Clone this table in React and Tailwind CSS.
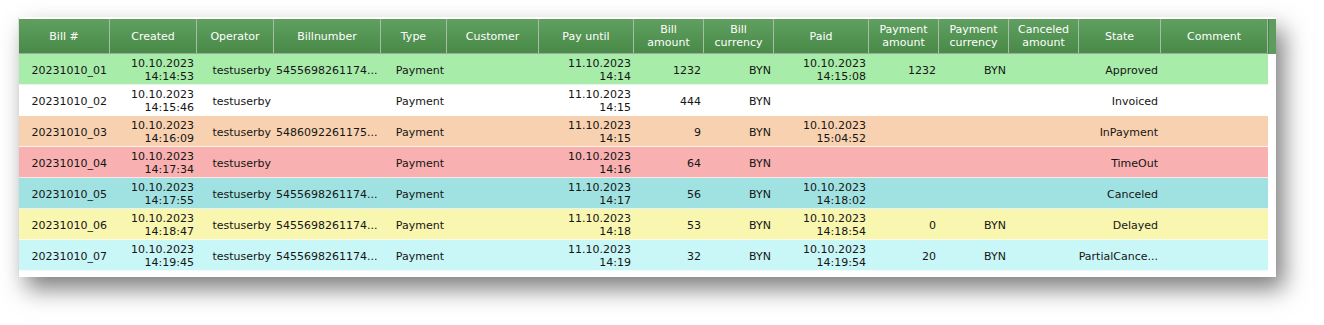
const cols = [
  { label: ['Bill #'], align: 'right' },
  { label: ['Created'], align: 'right' },
  { label: ['Operator'], align: 'right' },
  { label: ['Billnumber'], align: 'left' },
  { label: ['Type'], align: 'right' },
  { label: ['Customer'], align: 'right' },
  { label: ['Pay until'], align: 'right' },
  { label: ['Bill', 'amount'], align: 'right' },
  { label: ['Bill', 'currency'], align: 'right' },
  { label: ['Paid'], align: 'right' },
  { label: ['Payment', 'amount'], align: 'right' },
  { label: ['Payment', 'currency'], align: 'right' },
  { label: ['Canceled', 'amount'], align: 'right' },
  { label: ['State'], align: 'right' },
  { label: ['Comment'], align: 'right' },
];

const rows = [
  {
    bg: 'bg-[#a8ecaa]',
    cells: ['20231010_01', ['10.10.2023', '14:14:53'], 'testuserby', '5455698261174...', 'Payment', '', ['11.10.2023', '14:14'], '1232', 'BYN', ['10.10.2023', '14:15:08'], '1232', 'BYN', '', 'Approved', ''],
  },
  {
    bg: 'bg-white',
    cells: ['20231010_02', ['10.10.2023', '14:15:46'], 'testuserby', '', 'Payment', '', ['11.10.2023', '14:15'], '444', 'BYN', '', '', '', '', 'Invoiced', ''],
  },
  {
    bg: 'bg-[#f8d2b0]',
    cells: ['20231010_03', ['10.10.2023', '14:16:09'], 'testuserby', '5486092261175...', 'Payment', '', ['11.10.2023', '14:15'], '9', 'BYN', ['10.10.2023', '15:04:52'], '', '', '', 'InPayment', ''],
  },
  {
    bg: 'bg-[#f8b0b0]',
    cells: ['20231010_04', ['10.10.2023', '14:17:34'], 'testuserby', '', 'Payment', '', ['10.10.2023', '14:16'], '64', 'BYN', '', '', '', '', 'TimeOut', ''],
  },
  {
    bg: 'bg-[#a0e2e2]',
    cells: ['20231010_05', ['10.10.2023', '14:17:55'], 'testuserby', '5455698261174...', 'Payment', '', ['11.10.2023', '14:17'], '56', 'BYN', ['10.10.2023', '14:18:02'], '', '', '', 'Canceled', ''],
  },
  {
    bg: 'bg-[#f9f6b0]',
    cells: ['20231010_06', ['10.10.2023', '14:18:47'], 'testuserby', '5455698261174...', 'Payment', '', ['11.10.2023', '14:18'], '53', 'BYN', ['10.10.2023', '14:18:54'], '0', 'BYN', '', 'Delayed', ''],
  },
  {
    bg: 'bg-[#c9f7f7]',
    cells: ['20231010_07', ['10.10.2023', '14:19:45'], 'testuserby', '5455698261174...', 'Payment', '', ['11.10.2023', '14:19'], '32', 'BYN', ['10.10.2023', '14:19:54'], '20', 'BYN', '', 'PartialCance...', ''],
  },
];

const gridCols =
  'grid grid-cols-[91px_87px_77px_107px_66px_92px_95px_70px_70px_95px_70px_70px_70px_82px_107px]';

function Cell({ value, align }) {
  const lines = Array.isArray(value) ? value : [value];
  return (
    <div
      className={`flex flex-col justify-center overflow-hidden whitespace-nowrap pt-[2px] ${
        align === 'left' ? 'items-start pl-[2px]' : 'items-end pr-[3px]'
      }`}
    >
      {lines.map((l, i) => (
        <span key={i} className="block leading-[13px]">
          {l}
        </span>
      ))}
    </div>
  );
}

export default function App() {
  return (
    <div
      className="w-[1324px] h-[325px] bg-white pl-[18px] pt-[17px]"
      style={{ fontFamily: '"DejaVu Sans", Verdana, sans-serif' }}
    >
      <div className="w-[1258px] h-[260px] bg-white border-l border-[#dcdcdc] pt-[2px] shadow-[8px_12px_22px_rgba(0,0,0,0.5)]">
        <div className="flex">
          <div className={`${gridCols} h-[35px] bg-gradient-to-b from-[#609f60] to-[#488a48] border-b border-[#9fa89f]`}>
            {cols.map((c, i) => (
              <div
                key={i}
                className="flex flex-col items-center justify-center border-r border-[#a9bca9] text-white text-[11px]"
              >
                {c.label.map((l, j) => (
                  <span key={j} className="leading-[13px]">
                    {l}
                  </span>
                ))}
              </div>
            ))}
          </div>
          <div className="w-[8px] h-[35px] bg-[#5e9c5e] border-l border-[#4a804a]" />
        </div>
        <div className="w-[1249px] text-[11px] text-[#151515]">
          {rows.map((r, i) => (
            <div key={i} className={`${gridCols} h-[31px] ${r.bg} border-b border-white/70`}>
              {r.cells.map((v, j) => (
                <Cell key={j} value={v} align={cols[j].align} />
              ))}
            </div>
          ))}
        </div>
      </div>
    </div>
  );
}
